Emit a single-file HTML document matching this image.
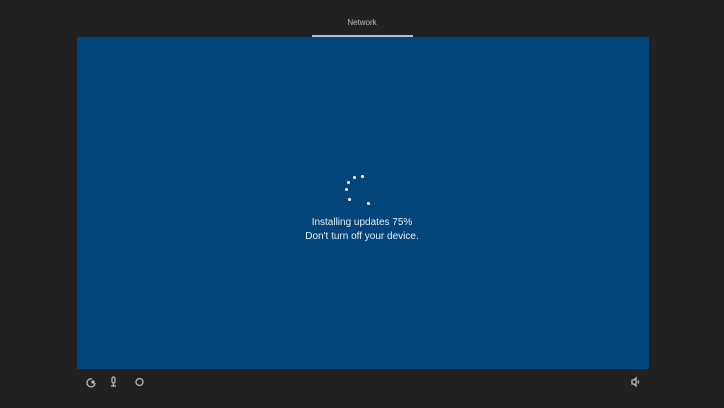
<!DOCTYPE html>
<html><head><style>
body{margin:0;width:724px;height:408px;background:#212121;position:relative;overflow:hidden;font-family:"Liberation Sans",sans-serif}
.p{position:absolute;left:77px;top:37px;width:572px;height:332px;background:#02457a}
.bar{position:absolute;left:312px;top:35px;width:101px;height:2px;background:#a9c2d6}
.t{position:absolute;top:18px;left:0;width:724px;text-align:center;color:#bbb;font-size:8px}
.m{position:absolute;left:0;width:724px;text-align:center;color:#e6eef5;font-size:10px}
.d{position:absolute;width:3px;height:3px;border-radius:50%;background:#fff}
</style></head><body>
<div class="t">Network</div>
<div class="p"></div>
<div class="bar"></div>
<div class="d" style="left:361px;top:175px"></div>
<div class="d" style="left:353px;top:176px"></div>
<div class="d" style="left:347px;top:181px"></div>
<div class="d" style="left:345px;top:188px"></div>
<div class="d" style="left:348px;top:198px"></div>
<div class="d" style="left:367px;top:202px"></div>
<div class="m" style="top:217px">Installing updates 75%</div>
<div class="m" style="top:231px">Don't turn off your device.</div>
<svg style="position:absolute;left:0;top:370px" width="724" height="30">
<g fill="none" stroke="#bbb" stroke-width="1.3">
<path d="M92 9 A4 4 0 1 0 95 13"/><circle cx="93" cy="12" r="1" fill="#bbb"/>
<rect x="112" y="7" width="3" height="6" rx="1.5"/><path d="M113.5 13v3M111 16h5"/>
<circle cx="139.5" cy="12" r="3.5"/>
<path d="M632 10h2l2-2v8l-2-2h-2z M638 10.5q1 1.5 0 3"/>
</g></svg>
</body></html>
